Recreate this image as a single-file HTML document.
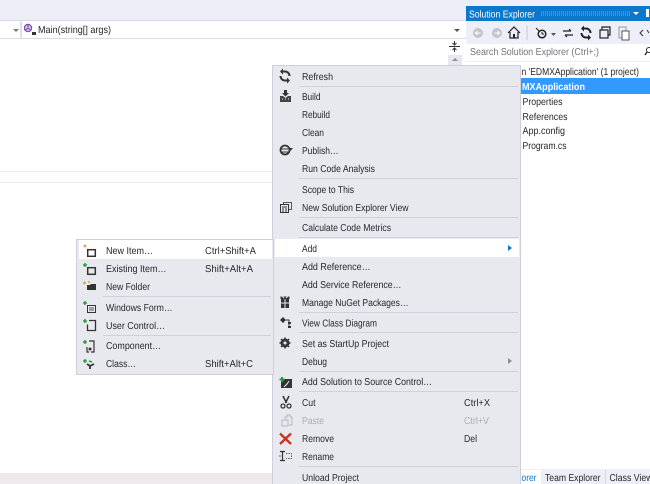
<!DOCTYPE html>
<html><head><meta charset="utf-8">
<style>
html,body{margin:0;padding:0}
body{width:650px;height:484px;overflow:hidden;background:#fff;position:relative;font-family:"Liberation Sans",sans-serif;font-size:10px;color:#1e1e1e}
div,svg{position:absolute}
.s{height:1px;background:#ced1da}
text{font-family:"Liberation Sans",sans-serif;font-size:10px;fill:#262626;text-rendering:geometricPrecision}
</style></head><body>

<!-- top -->
<div style="left:0;top:0;width:650px;height:20px;background:#eeeef8"></div>
<div style="left:0;top:20px;width:466px;height:19px;background:#fff;border-top:1px solid #d8d9e8;border-bottom:1px solid #d8d9e8;box-sizing:border-box"></div>
<div style="left:20px;top:20px;width:2px;height:19px;background:#dfe0ec"></div>
<div style="left:13px;top:29px;border:3px solid transparent;border-top-color:#777;border-bottom:0"></div>
<svg style="left:24px;top:23px" width="14" height="14" viewBox="0 0 14 14"><circle cx="4" cy="5" r="3.600" fill="#d9c7ec" stroke="#7a4fae" stroke-width="1.200"/><path d="M4 2v3L1.500 7M4 5l2.500 2" stroke="#7a4fae" fill="none"/><rect x="8" y="9" width="4" height="3" fill="#333"/></svg>
<div style="left:454px;top:29px;border:3px solid transparent;border-top-color:#555;border-bottom:0"></div>
<svg style="left:449px;top:41px" width="12" height="12" viewBox="0 0 12 12"><path d="M0 5.500h11M5.500 0v3.500M3.500 2l2 2 2-2M5.500 11V7.500M3.500 9l2-2 2 2" stroke="#333" fill="none"/></svg>
<div style="left:448px;top:55px;width:14px;height:10px;background:#e6e7f0"></div>
<div style="left:452px;top:58px;border:3px solid transparent;border-bottom-color:#8e8f98;border-top:0"></div>
<div style="left:0;top:171px;width:272px;height:1px;background:#ececf0"></div>
<div style="left:0;top:182px;width:272px;height:1px;background:#ececf0"></div>
<div style="left:0;top:473px;width:272px;height:11px;background:#efe9ee"></div>

<!-- Solution explorer -->
<div style="left:466px;top:0;width:184px;height:484px;background:#fff"></div>
<div style="left:466px;top:0;width:184px;height:6px;background:#eeeef8"></div>
<div style="left:466px;top:6px;width:184px;height:15px;background:#0b78cf"></div>
<div style="left:541px;top:11px;width:90px;height:5px;background:repeating-linear-gradient(90deg,#3f95dc 0 1px,transparent 1px 2px)"></div>
<div style="left:633px;top:12px;border:3px solid transparent;border-top-color:#fff;border-bottom:0"></div>
<div style="left:646px;top:9px;width:3px;height:8px;background:#fff"></div>
<div style="left:466px;top:21px;width:184px;height:23px;background:#eeeef8"></div>
<svg style="left:470px;top:24px" width="180" height="18" viewBox="0 0 180 18">
<circle cx="8" cy="9" r="5" fill="#c3c4ca"/><path d="M10.500 9h-5M7.500 7l-2 2 2 2" stroke="#fff" fill="none"/>
<circle cx="27" cy="9" r="5" fill="#c3c4ca"/><path d="M24.500 9h5M27.500 7l2 2-2 2" stroke="#fff" fill="none"/>
<path d="M38 9l6-6 6 6M40 8v6h8V8" stroke="#222" stroke-width="1.200" fill="none"/><rect x="43" y="10" width="2" height="4" fill="#222"/>
<path d="M57 2v14" stroke="#c6c7d0"/>
<circle cx="72" cy="10" r="3.800" fill="none" stroke="#222" stroke-width="1.500"/><path d="M66 4l3 3" stroke="#222"/><path d="M72 8v2h2" stroke="#222" fill="none"/>
<path d="M81 9h5l-2.500 3z" fill="#555"/>
<path d="M93 7h8M99 5l2 2M95 11h8M95 11l2 2" stroke="#222" stroke-width="1.200" fill="none"/>
<g transform="translate(102,-2)"><path d="M11 6.500h3a4.500 4.500 0 0 1 4.500 4.500M17 15.500h-3a4.500 4.500 0 0 1-4.500-4.500" stroke="#222" stroke-width="2" fill="none"/><path d="M12 3.500v6l-3-3zM16 12.500v6l3-3z" fill="#222"/></g>
<rect x="130" y="6" width="8" height="8" fill="none" stroke="#222" stroke-width="1.200"/><path d="M132 6V3h8v8h-2" fill="none" stroke="#222" stroke-width="1.200"/>
<path d="M149 3h7v11h-7z" fill="none" stroke="#999"/><rect x="152" y="7" width="7" height="9" fill="#fff" stroke="#555"/>
<path d="M173 6l-3 3 3 3M177 6l2 3" stroke="#333" fill="none"/>
</svg>
<div style="left:466px;top:44px;width:184px;height:17px;background:#fff"></div>
<svg style="left:644px;top:46px" width="6" height="12" viewBox="0 0 6 12"><circle cx="5" cy="4" r="2.500" fill="none" stroke="#333"/><path d="M3 6L1 9" stroke="#333" stroke-width="1.500"/></svg>
<div style="left:466px;top:61px;width:184px;height:1px;background:#eeeef6"></div>
<div style="left:521px;top:78px;width:129px;height:16px;background:#3399ff"></div>
<div style="left:466px;top:469px;width:184px;height:15px;background:#eeeef8"></div>
<div style="left:521px;top:470px;width:20px;height:14px;background:#fff"></div>
<div style="left:605px;top:470px;width:1px;height:14px;background:#d6d7e2"></div>

<!-- main menu -->
<div style="left:272px;top:65px;width:249px;height:419px;background:#e7e9ee;border:1px solid #cdd0dc;border-bottom:0;box-sizing:border-box"></div>
<div style="left:275px;top:239px;width:244px;height:18px;background:#fff"></div>
<div class="s" style="left:299px;top:86px;width:219px"></div>
<div class="s" style="left:299px;top:178px;width:219px"></div>
<div class="s" style="left:299px;top:217px;width:219px"></div>
<div class="s" style="left:299px;top:237px;width:219px"></div>
<div class="s" style="left:299px;top:312px;width:219px"></div>
<div class="s" style="left:299px;top:332px;width:219px"></div>
<div class="s" style="left:299px;top:371px;width:219px"></div>
<div class="s" style="left:299px;top:391px;width:219px"></div>
<div class="s" style="left:299px;top:466px;width:219px"></div>
<div style="left:508px;top:245px;border:3px solid transparent;border-left:4px solid #0b78cf;border-right:0"></div>
<div style="left:508px;top:358px;border:3px solid transparent;border-left:4px solid #8e9097;border-right:0"></div>

<svg style="left:271px;top:65px" width="32" height="419" viewBox="0 0 32 419">
<!-- refresh -->
<path d="M11 6.500h3a4.500 4.500 0 0 1 4.500 4.500M17 15.500h-3a4.500 4.500 0 0 1-4.500-4.500" stroke="#333" stroke-width="2" fill="none"/><path d="M12 3.500v6l-3-3zM16 12.500v6l3-3z" fill="#333"/>
<!-- build -->
<path d="M13 25h3v3h2l-3.500 3.500L11 28h2z" fill="#333"/><path d="M9 31h3l2.500 2 2.500-2h3v6H9z" fill="#444"/><path d="M11 34h1M14 34h1M17 34h1" stroke="#eee"/>
<!-- publish -->
<circle cx="14" cy="85" r="4.500" fill="none" stroke="#333" stroke-width="1.800"/><path d="M10 84h7M11 87h6" stroke="#333"/><path d="M17 83h5l-2.500 3z" fill="#333"/>
<!-- new view -->
<rect x="12.500" y="137.500" width="8" height="7" fill="none" stroke="#555"/><rect x="9.500" y="139.500" width="8" height="8" fill="#e7e9ee" stroke="#333"/><path d="M11 142h5M11 144h2M14 144h2M11 146h2M14 146h2" stroke="#333"/>
<!-- nuget -->
<path d="M10 234h8v9h-8zM9.500 231.500h9v2.500h-9z" fill="#333"/><path d="M11 231l2 2M17 231l-2 2M14 234v9M10 238h8" stroke="#e7e9ee"/>
<!-- class diagram -->
<path d="M9 255l3-3 3 3-3 3zM17 257h3v2h-3zM17 261h3v2h-3z" fill="#333"/><path d="M15 255h3v8" stroke="#333" fill="none"/>
<!-- gear -->
<circle cx="14" cy="278" r="3.500" fill="none" stroke="#333" stroke-width="2"/><path d="M14 272.500v11M8.500 278h11M10 274l8 8M18 274l-8 8" stroke="#333" stroke-width="1.500"/><circle cx="14" cy="278" r="1.500" fill="#e7e9ee"/>
<!-- source control -->
<rect x="10" y="314" width="11" height="9" fill="#333"/><path d="M13 322l3-3 2-3" stroke="#e7e9ee" fill="none"/><path d="M11 312v5M8.500 314.500h5" stroke="#2f9d36" stroke-width="2"/>
<!-- cut -->
<path d="M12 331l3.500 7M18 331l-3.500 7" stroke="#333" stroke-width="1.500"/><circle cx="12" cy="341" r="2" fill="none" stroke="#333" stroke-width="1.300"/><circle cx="18" cy="341" r="2" fill="none" stroke="#333" stroke-width="1.300"/>
<!-- paste -->
<path d="M14 354v-2h2v-2h3v2h2v8h-3M11 355h6v6h-6z" fill="none" stroke="#b5b8bf"/>
<!-- remove -->
<path d="M9 368.500l11 10.500M20 368.500L9 379" stroke="#c8321e" stroke-width="2.300"/>
<!-- rename -->
<path d="M9 386.500h5M9 395.500h5M11.500 386.500v9" stroke="#333" stroke-width="1.200"/><path d="M15 388.500h5.500v5H15" fill="none" stroke="#666" stroke-dasharray="1.500 1"/><path d="M9 390v2" stroke="#666"/>
</svg>

<!-- submenu -->
<div style="left:76px;top:239px;width:198px;height:136px;background:#e7e9ee;border:1px solid #cdd0dc;box-sizing:border-box"></div>
<div style="left:79px;top:240px;width:193px;height:19px;background:#fff"></div>
<div class="s" style="left:103px;top:296px;width:168px"></div>
<div class="s" style="left:103px;top:335px;width:168px"></div>
<svg style="left:76px;top:239px" width="30" height="136" viewBox="0 0 30 136">
<path d="M7.500 7h3M9 5.500v3" stroke="#d9a441" stroke-width="1.500"/><rect x="11.700" y="10.700" width="7.600" height="6.600" fill="none" stroke="#333" stroke-width="1.500"/>
<path d="M7 26h4M9 24v4" stroke="#2f9d36" stroke-width="1.500"/><rect x="11.700" y="28.700" width="7.600" height="6.600" fill="none" stroke="#333" stroke-width="1.500"/>
<path d="M7 44h3M8.500 42.500v3M12 43h2" stroke="#d9a441" stroke-width="1.500"/><path d="M11 46h3l1-1h5v6h-9z" fill="#333"/>
<path d="M7 64h4M9 62v4" stroke="#2f9d36" stroke-width="1.500"/><rect x="11.500" y="66.500" width="8" height="7" fill="none" stroke="#333"/><path d="M13 69h5M13 71h5" stroke="#555"/>
<path d="M7 82h4M9 80v4" stroke="#2f9d36" stroke-width="1.500"/><path d="M13 81.500h6.500v10H11.500v-6" fill="none" stroke="#333" stroke-width="1.300"/>
<path d="M7 103h4M9 101v4" stroke="#2f9d36" stroke-width="1.500"/><path d="M13 102h5v11h-3M11 108v5h2" fill="none" stroke="#333" stroke-width="1.200"/><circle cx="14" cy="110" r="1.500" fill="#333"/>
<path d="M7 122h4M9 120v4" stroke="#2f9d36" stroke-width="1.500"/><path d="M11 125l3 2 4-2M14 127v3" stroke="#333" stroke-width="1.800" fill="none"/><path d="M13 122l3 1" stroke="#2f9d36" stroke-width="1.500"/>
</svg>

<!-- all text -->
<svg style="left:0;top:0;filter:blur(.3px)" width="650" height="484" viewBox="0 0 650 484">
<text lengthAdjust="spacingAndGlyphs" x="38" y="33" textLength="73">Main(string[] args)</text>
<text lengthAdjust="spacingAndGlyphs" x="469" y="17.500" textLength="66" style="fill:#fff">Solution Explorer</text>
<text lengthAdjust="spacingAndGlyphs" x="470" y="55" textLength="129" style="fill:#71747c">Search Solution Explorer (Ctrl+;)</text>
<text lengthAdjust="spacingAndGlyphs" x="521.500" y="75" textLength="117.500">n 'EDMXApplication' (1 project)</text>
<text lengthAdjust="spacingAndGlyphs" x="522" y="90" textLength="63" style="fill:#fff;font-weight:bold">MXApplication</text>
<text lengthAdjust="spacingAndGlyphs" x="522.500" y="105" textLength="40">Properties</text>
<text lengthAdjust="spacingAndGlyphs" x="522.500" y="120" textLength="45">References</text>
<text lengthAdjust="spacingAndGlyphs" x="522.500" y="134" textLength="42.500">App.config</text>
<text lengthAdjust="spacingAndGlyphs" x="522.500" y="149" textLength="44">Program.cs</text>
<text lengthAdjust="spacingAndGlyphs" x="521.500" y="481" textLength="15" style="fill:#0b78cf">orer</text>
<text lengthAdjust="spacingAndGlyphs" x="545" y="481" textLength="55.500">Team Explorer</text>
<text lengthAdjust="spacingAndGlyphs" x="609.500" y="481" textLength="43">Class View</text>

<text lengthAdjust="spacingAndGlyphs" x="302" y="80" textLength="31">Refresh</text>
<text lengthAdjust="spacingAndGlyphs" x="302" y="100" textLength="18.500">Build</text>
<text lengthAdjust="spacingAndGlyphs" x="302" y="118" textLength="28">Rebuild</text>
<text lengthAdjust="spacingAndGlyphs" x="302" y="136" textLength="22">Clean</text>
<text lengthAdjust="spacingAndGlyphs" x="302" y="154" textLength="36.500">Publish…</text>
<text lengthAdjust="spacingAndGlyphs" x="302" y="172" textLength="73">Run Code Analysis</text>
<text lengthAdjust="spacingAndGlyphs" x="302" y="193" textLength="52">Scope to This</text>
<text lengthAdjust="spacingAndGlyphs" x="302" y="211" textLength="106.500">New Solution Explorer View</text>
<text lengthAdjust="spacingAndGlyphs" x="302" y="231" textLength="89">Calculate Code Metrics</text>
<text lengthAdjust="spacingAndGlyphs" x="302" y="252" textLength="15">Add</text>
<text lengthAdjust="spacingAndGlyphs" x="302" y="270" textLength="68.500">Add Reference…</text>
<text lengthAdjust="spacingAndGlyphs" x="302" y="288" textLength="99.500">Add Service Reference…</text>
<text lengthAdjust="spacingAndGlyphs" x="302" y="306" textLength="106.500">Manage NuGet Packages…</text>
<text lengthAdjust="spacingAndGlyphs" x="302" y="326.500" textLength="75">View Class Diagram</text>
<text lengthAdjust="spacingAndGlyphs" x="302" y="347" textLength="87">Set as StartUp Project</text>
<text lengthAdjust="spacingAndGlyphs" x="302" y="365" textLength="25">Debug</text>
<text lengthAdjust="spacingAndGlyphs" x="302" y="385" textLength="130">Add Solution to Source Control…</text>
<text lengthAdjust="spacingAndGlyphs" x="302" y="406" textLength="13.500">Cut</text>
<text lengthAdjust="spacingAndGlyphs" x="302" y="424" textLength="22" style="fill:#a9acb3">Paste</text>
<text lengthAdjust="spacingAndGlyphs" x="302" y="442" textLength="32">Remove</text>
<text lengthAdjust="spacingAndGlyphs" x="302" y="460" textLength="32">Rename</text>
<text lengthAdjust="spacingAndGlyphs" x="302" y="481" textLength="57">Unload Project</text>
<text lengthAdjust="spacingAndGlyphs" x="464" y="406" textLength="26">Ctrl+X</text>
<text lengthAdjust="spacingAndGlyphs" x="464" y="424" textLength="25" style="fill:#a9acb3">Ctrl+V</text>
<text lengthAdjust="spacingAndGlyphs" x="464" y="442" textLength="13">Del</text>

<text lengthAdjust="spacingAndGlyphs" x="106" y="254" textLength="47">New Item…</text>
<text lengthAdjust="spacingAndGlyphs" x="106" y="272" textLength="60.500">Existing Item…</text>
<text lengthAdjust="spacingAndGlyphs" x="106" y="290" textLength="44">New Folder</text>
<text lengthAdjust="spacingAndGlyphs" x="106" y="311" textLength="66.500">Windows Form…</text>
<text lengthAdjust="spacingAndGlyphs" x="106" y="329" textLength="59">User Control…</text>
<text lengthAdjust="spacingAndGlyphs" x="106" y="349" textLength="55">Component…</text>
<text lengthAdjust="spacingAndGlyphs" x="106" y="367" textLength="30">Class…</text>
<text lengthAdjust="spacingAndGlyphs" x="205" y="254" textLength="51">Ctrl+Shift+A</text>
<text lengthAdjust="spacingAndGlyphs" x="205" y="272" textLength="48">Shift+Alt+A</text>
<text lengthAdjust="spacingAndGlyphs" x="205" y="367" textLength="48">Shift+Alt+C</text>
</svg>
</body></html>
